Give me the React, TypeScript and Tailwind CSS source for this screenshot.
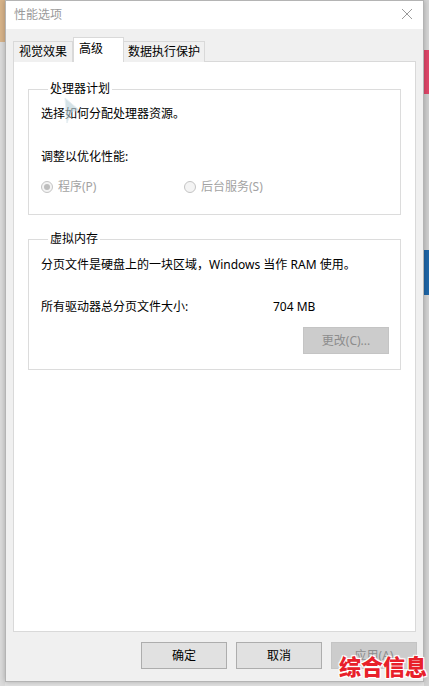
import React from "react";

const font = "font-['Segoe_UI','Noto_Sans','Noto_Sans_CJK_SC',sans-serif]";

function Radio({ checked, label }: { checked?: boolean; label: string }) {
  return (
    <div className="flex items-center gap-[5px]">
      <span className="flex h-[12px] w-[12px] items-center justify-center rounded-full border border-[#c4c4c4] bg-[#f4f4f4]">
        {checked && <span className="h-[6px] w-[6px] rounded-full bg-[#bdbdbd]" />}
      </span>
      <span className="text-[#a3a3a3]">{label}</span>
    </div>
  );
}

function Btn({ children, disabled }: { children: React.ReactNode; disabled?: boolean }) {
  return (
    <button
      className={
        disabled
          ? "h-[27px] w-[86px] border border-[#c4c4c4] bg-[#cccccc] text-[#8c8c8c]"
          : "h-[27px] w-[86px] border border-[#adadad] bg-[#e1e1e1] text-black"
      }
    >
      {children}
    </button>
  );
}

export default function App() {
  return (
    <div className={`flex h-[686px] w-[429px] bg-[#e4e4e4] text-[12px] leading-[16px] ${font}`}>
      {/* left background strip */}
      <div className="flex w-[5px] flex-col">
        <div className="h-[42px] bg-[#d8b48a]" />
        <div className="flex-1 bg-[#dcdcdc]" />
      </div>

      {/* window */}
      <div className="relative flex h-[682px] w-[419px] flex-col border border-[#b4b4b4] bg-[#f0f0f0] shadow-[0_0_6px_rgba(0,0,0,0.25)]">
        {/* title bar */}
        <div className="flex h-[28px] items-center justify-between bg-white pl-[8px] pr-[10px]">
          <span className="text-[#9a9a9a]">性能选项</span>
          <svg width="12" height="12" viewBox="0 0 12 12" className="mt-[-2px]">
            <path d="M1 1L11 11M11 1L1 11" stroke="#9a9a9a" strokeWidth="1" />
          </svg>
        </div>

        <div className="flex flex-1 flex-col px-[7px] pt-[8px]">
          {/* tabs */}
          <div className="relative z-10 -mb-px flex items-end">
            <div className="flex h-[21px] items-center border border-b-0 border-[#d9d9d9] bg-[#f0f0f0] px-[5px]">视觉效果</div>
            <div className="flex h-[25px] items-start border border-b-0 border-[#d9d9d9] bg-white px-[5px] pt-[3px] pr-[20px]">高级</div>
            <div className="flex h-[21px] items-center border border-b-0 border-l-0 border-[#d9d9d9] bg-[#f0f0f0] px-[4px]">数据执行保护</div>
          </div>

          {/* tab panel */}
          <div className="relative flex h-[571px] flex-col border border-[#d9d9d9] bg-white px-[14px] pt-[19px]">
            <fieldset className="border border-[#dcdcdc] pb-[19px] pl-[12px]">
              <legend className="ml-[7px] px-[2px]">处理器计划</legend>
              <div className="mt-[9px]">选择如何分配处理器资源。</div>
              <div className="mt-[27px]">调整以优化性能:</div>
              <div className="mt-[14px] flex">
                <div className="w-[143px]">
                  <Radio checked label="程序(P)" />
                </div>
                <Radio label="后台服务(S)" />
              </div>
            </fieldset>

            <fieldset className="mt-[16px] border border-[#dcdcdc] pb-[15px] pl-[12px] pr-[11px]">
              <legend className="ml-[7px] px-[2px]">虚拟内存</legend>
              <div className="mt-[10px]">分页文件是硬盘上的一块区域，Windows 当作 RAM 使用。</div>
              <div className="mt-[26px] flex">
                <span className="w-[232px]">所有驱动器总分页文件大小:</span>
                <span>704 MB</span>
              </div>
              <div className="mt-[12px] flex justify-end">
                <Btn disabled>更改(C)...</Btn>
              </div>
            </fieldset>

            {/* mouse pointer */}
            <svg
              width="18"
              height="30"
              viewBox="0 0 18 30"
              className="absolute left-[49px] top-[34px] opacity-60"
            >
              <path d="M2 2L16 14L8 16L4 27Z" fill="#b8cfd8" stroke="#d6e4ea" strokeWidth="1" />
            </svg>
          </div>

          {/* bottom buttons */}
          <div className="-mr-px mt-[10px] flex justify-end gap-[9px]">
            <Btn>确定</Btn>
            <Btn>取消</Btn>
            <Btn disabled>应用(A)</Btn>
          </div>
        </div>

        {/* watermark */}
        <div className="absolute bottom-[2px] right-[-4px] text-[22px] font-black leading-[28px] tracking-[0px] text-[#e8202a] [text-shadow:_1px_1px_0_#fff,-1px_-1px_0_#fff,1px_-1px_0_#fff,-1px_1px_0_#fff,0_0_3px_#fff] font-['Noto_Sans_CJK_SC',sans-serif]">
          综合信息
        </div>
      </div>

      {/* right background strip */}
      <div className="flex w-[5px] flex-col">
        <div className="h-[50px] bg-[#d6d6d6]" />
        <div className="h-[44px] bg-[#e0476a]" />
        <div className="h-[156px] bg-[#cfcfcf]" />
        <div className="h-[45px] bg-[#1f67a8]" />
        <div className="flex-1 bg-[#d4d4d4]" />
      </div>
    </div>
  );
}
